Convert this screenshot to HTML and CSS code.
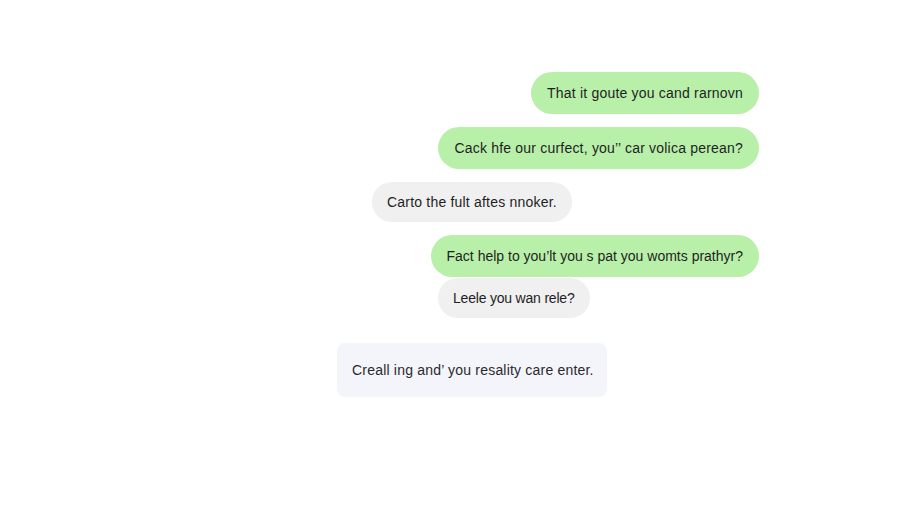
FILE: index.html
```html
<!DOCTYPE html>
<html lang="en">
<head>
  <meta charset="UTF-8" />
  <meta name="viewport" content="width=device-width, initial-scale=1" />
  <title>Chat</title>
  <link rel="stylesheet" href="styles.css">
</head>
<body>

<div class="chat">
  <div class="msg out wide">That it goute you cand rarnovn</div>
  <div class="msg out wide">Cack hfe our curfect, you’’ car volica perean?</div>
  <div class="msg in first wide">Carto the fult aftes nnoker.</div>
  <div class="msg out">Fact help to you’lt you s pat you womts prathyr?</div>
  <div class="msg in second">Leele you wan rele?</div>
  <div class="note wide">Creall ing and’ you resality care enter.</div>
</div>

</body>
</html>
```

FILE: styles.css
```css
body {
  font-family: 'Liberation Sans', Arial, sans-serif;
  background-color: #fff;
  color: #1f1f1f;
  margin: 0;
  padding: 0;
}
.chat {
  width: 422px;
  margin: 72px 0 0 337px;
  display: flex;
  flex-direction: column;
  align-items: flex-start;
}
.msg {
  font-size: 14px;
  line-height: 18px;
  padding: 12px 16px;
  border-radius: 21px;
  white-space: nowrap;
}
.wide {
  letter-spacing: 0.2px;
}
.out {
  align-self: flex-end;
  background-color: #b8efa9;
  margin-bottom: 13px;
}
.in {
  background-color: #f0f0f0;
  padding: 11px 15px;
}
.first {
  margin-left: 35px;
  margin-bottom: 13px;
}
.second {
  margin-top: -12px;
  margin-left: 101px;
  margin-bottom: 25px;
  letter-spacing: -0.2px;
}
.note {
  box-sizing: border-box;
  width: 270px;
  background-color: #f4f4fb;
  border-radius: 8px;
  font-size: 14px;
  line-height: 18px;
  padding: 18px 15px;
  white-space: nowrap;
  color: #2a2a2a;
}
```
